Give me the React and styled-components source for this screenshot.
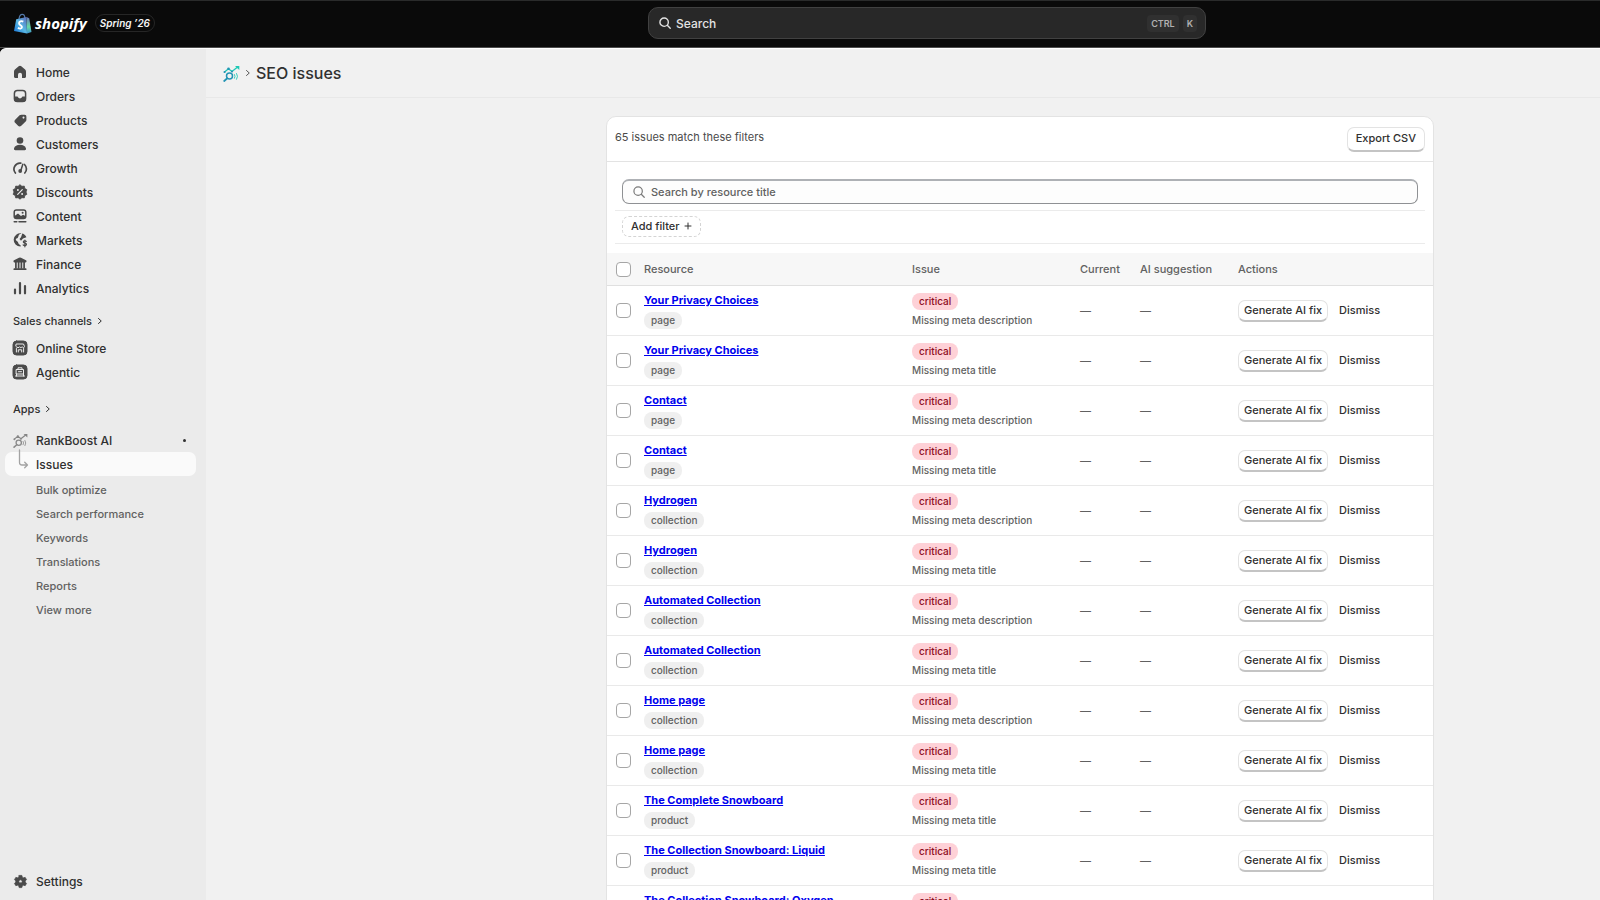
import React from 'react'
import styled, { createGlobalStyle } from 'styled-components'

const GlobalStyle = createGlobalStyle`
    * {
        box-sizing: border-box;
    }
    body {
        margin: 0;
        background: #0a0a0a;
        font-family: Inter, "Liberation Sans", sans-serif;
        font-size: 12px;
        color: #303030;
    }
    button, input {
        font-family: inherit;
    }
`
const Page = styled.div`
    height: 100vh;
    display: flex;
    flex-direction: column;
    overflow: hidden;
`
const TopBar = styled.header`
    height: 48px;
    flex-shrink: 0;
    display: grid;
    grid-template-columns: 1fr 558px 394px;
    align-items: center;
    padding-bottom: 2px;
    border-top: 1px solid #2a2b2b;
    border-bottom: 1px solid #4d4d4d;
`
const Brand = styled.div`
    display: flex;
    align-items: center;
    padding-left: 14px;
`
const Wordmark = styled.span`
    margin: 0 8px 0 3px;
    font-family: "Open Sans", sans-serif;
    font-size: 15px;
    font-weight: 700;
    font-style: italic;
    line-height: 20px;
    color: #fff;
`
const Edition = styled.span`
    padding: 0 4px;
    border: 1px solid #262626;
    border-radius: 9px;
    font-size: 10px;
    font-weight: 600;
    font-style: italic;
    line-height: 16px;
    color: #f4f4f4;
`
const GlobalSearch = styled.button`
    height: 32px;
    display: flex;
    align-items: center;
    gap: 4px;
    padding: 0 8px 0 9px;
    border: 1px solid #414141;
    border-radius: 10px;
    background: #282828;
    color: #e3e3e3;
    font-size: 12px;
    font-weight: 450;
    text-align: left;
`
const SearchText = styled.span`
    flex: 1;
`
const Key = styled.kbd`
    padding: 0 4px;
    border-radius: 4px;
    background: #303030;
    color: #b0b0b0;
    font-family: inherit;
    font-size: 9px;
    font-weight: 600;
    line-height: 17px;
`
const Body = styled.div`
    flex: 1;
    min-height: 0;
    display: flex;
    border-top: 1px solid #fff;
    border-radius: 6px 0 0 0;
    background: #f1f1f1;
    overflow: hidden;
`
const Sidebar = styled.nav`
    width: 206px;
    flex-shrink: 0;
    display: flex;
    flex-direction: column;
    padding: 11px 10px 7px 5px;
    background: #ebebeb;
`
const NavList = styled.ul`
    margin: 0;
    padding: 0;
    list-style: none;
`
const SubNavList = styled(NavList)`
    padding-top: 2px;
`
const NavLink = styled.a`
    height: 24px;
    display: flex;
    align-items: center;
    gap: 8px;
    padding: 0 10px 0 7px;
    border-radius: 7px;
    background: ${props => props.$active ? '#fafafa' : 'transparent'};
    color: ${props => props.$sub ? '#616161' : '#303030'};
    font-size: ${props => props.$sub ? 11 : 12}px;
    font-weight: 500;
    text-decoration: none;
`
const NavIcon = styled.span`
    width: 16px;
    height: 24px;
    flex-shrink: 0;
    display: flex;
    align-items: center;
    justify-content: center;
    color: #4a4a4a;
`
const NavSection = styled.button`
    display: flex;
    align-items: center;
    gap: 4px;
    margin: ${props => props.$first ? '10px 0 4px' : '14px 0 8px'};
    padding: 0 8px;
    border: none;
    background: none;
    color: #303030;
    font-size: 11px;
    font-weight: 500;
    line-height: 22px;
`
const Dot = styled.span`
    width: 3px;
    height: 3px;
    margin-left: auto;
    border-radius: 50%;
    background: #303030;
`
const NavBottom = styled.div`
    margin-top: auto;
`
const Main = styled.main`
    flex: 1;
    min-width: 0;
`
const TitleBar = styled.div`
    height: 49px;
    display: flex;
    align-items: center;
    gap: 4px;
    padding-left: 17px;
    border-bottom: 1px solid #e8e8e8;
`
const Title = styled.h1`
    margin: 0;
    font-size: 16px;
    font-weight: 550;
    line-height: 20px;
`
const Content = styled.div`
    display: flex;
    justify-content: flex-end;
    padding: 18px 166px 0 20px;
`
const Card = styled.section`
    width: 828px;
    border: 1px solid #e3e3e3;
    border-radius: 10px;
    background: #fff;
    overflow: hidden;
`
const CardHeader = styled.div`
    height: 45px;
    display: flex;
    align-items: center;
    justify-content: space-between;
    padding: 0 8px;
    border-bottom: 1px solid #e3e3e3;
`
const Summary = styled.p`
    margin: 0;
    padding-bottom: 4px;
    font-size: 11px;
    font-weight: 400;
    color: #4a4a4a;
`
const Button = styled.button`
    height: ${props => props.$small ? 22 : 25}px;
    padding: ${props => props.$small ? '0 5px 1px' : '0 8px 2px'};
    border: 1px solid #e3e3e3;
    border-bottom: 2px solid #c4c4c4;
    border-radius: 7px;
    background: #fff;
    color: #303030;
    font-size: 11px;
    font-weight: 500;
    white-space: nowrap;
`
const PlainButton = styled(Button)`
    border-color: transparent;
    background: none;
`
const Filters = styled.div`
    padding: 17px 8px 9px;
`
const SearchField = styled.label`
    height: 25px;
    display: flex;
    align-items: center;
    gap: 5px;
    margin: 0 7px;
    padding: 0 9px 1px;
    border: 1px solid #8f9194;
    border-top: 2px solid #aeb1b5;
    border-radius: 7px;
    background: #fdfdfd;
    color: #7a7a7a;
`
const SearchInput = styled.input`
    flex: 1;
    padding: 0;
    border: none;
    outline: none;
    background: none;
    font-size: 11px;
    font-weight: 500;
    line-height: 16px;
    &::placeholder {
        color: #616161;
        opacity: 1;
    }
`
const FilterRow = styled.div`
    display: flex;
    margin-top: 6px;
    padding: 5px 7px 6px;
    border-top: 1px solid #ebebeb;
    border-bottom: 1px solid #ebebeb;
`
const AddFilter = styled.button`
    height: 21px;
    display: flex;
    align-items: center;
    gap: 4px;
    padding: 0 8px 1px;
    border: 1px dashed #d4d4d4;
    border-radius: 7px;
    background: none;
    color: #303030;
    font-size: 11px;
    font-weight: 450;
`
const Table = styled.table`
    width: 100%;
    table-layout: fixed;
    border-collapse: separate;
    border-spacing: 0;
`
const Col = styled.col`
    width: ${props => props.$width};
`
const HeadCell = styled.th`
    height: 33px;
    padding: 0;
    border-bottom: 1px solid #e0e0e0;
    background: #f7f7f7;
    color: #616161;
    font-size: 11px;
    font-weight: 500;
    text-align: left;
`
const Cell = styled.td`
    height: 50px;
    padding: 0;
    border-bottom: 1px solid #e9e9e9;
    color: #616161;
    font-size: 11px;
    vertical-align: middle;
`
const Checkbox = styled.input`
    width: 15px;
    height: 15px;
    display: block;
    margin: 0 0 0 9px;
    appearance: none;
    border: 1px solid #a6a6a6;
    border-radius: 4px;
    background: #fff;
`
const Stack = styled.div`
    display: flex;
    flex-direction: column;
    align-items: flex-start;
    gap: ${props => props.$gap}px;
    white-space: nowrap;
`
const ResourceLink = styled.a`
    color: #0000ee;
    font-size: 11px;
    font-weight: 700;
    line-height: 16px;
`
const Badge = styled.span`
    padding: 0 7px;
    border-radius: 8px;
    background: ${props => props.$critical ? '#fed1d7' : '#efefef'};
    color: ${props => props.$critical ? '#8e0b21' : '#616161'};
    font-size: 10px;
    font-weight: ${props => props.$critical ? 550 : 500};
    line-height: 17px;
`
const IssueText = styled.span`
    font-size: 10px;
    font-weight: 500;
    line-height: 17px;
`
const Actions = styled.div`
    display: flex;
    align-items: center;
    gap: 5px;
`

const Svg = ({ size = 16, children, ...rest }) => (
    <svg width={size} height={size} viewBox="0 0 16 16" fill="none" stroke="currentColor"
        strokeLinecap="round" strokeLinejoin="round" aria-hidden="true" {...rest}>{children}</svg>
)

const SearchIcon = ({ width = 1.4 }) => (
    <Svg size={14} strokeWidth={width}><circle cx="7" cy="7" r="4.8" /><path d="M10.6 10.6L14 14" /></Svg>
)

const Chevron = ({ size = 8, width = 2 }) => (
    <Svg size={size} strokeWidth={width}><path d="M5 3l5.500 5L5 13" /></Svg>
)

const ShopifyBag = () => (
    <svg width="18" height="21" viewBox="0 0 18 21" aria-hidden="true">
        <defs>
            <linearGradient id="bag" x1="0" y1="1" x2="1" y2="0">
                <stop offset="0" stopColor="#1672d8" />
                <stop offset="0.5" stopColor="#58b7e4" />
                <stop offset="1" stopColor="#5c69b8" />
            </linearGradient>
            <linearGradient id="bagSide" x1="0" y1="0" x2="0" y2="1">
                <stop offset="0" stopColor="#6774bb" />
                <stop offset="0.6" stopColor="#68d8a4" />
                <stop offset="1" stopColor="#3c91d4" />
            </linearGradient>
        </defs>
        <path d="M5 6c.3-2.600 1.700-4.700 3.300-4.700S10.800 3 10.900 5" fill="none" stroke="#5579a8" strokeWidth="1.200" />
        <path d="M2.200 6.200L12.500 4 13 20.500 0 18z" fill="url(#bag)" />
        <path d="M12.500 4l2.700 1.300L17.500 19 13 20.500z" fill="url(#bagSide)" />
        <path d="M9.300 8.600C7.400 7.600 5 8.300 5 10.200c0 2 3 1.900 3 3.900 0 1.700-2.300 1.900-4.100.7" fill="none" stroke="#fff" strokeWidth="1.800" />
    </svg>
)

const RankIcon = ({ color = false, size = 15 }) => {
    const main = color ? '#2494b4' : '#8a8a8a'
    const accent = color ? '#1dc9b5' : '#858585'
    return (
        <svg width={size} height={size} viewBox="0 0 17 17" fill="none" strokeLinecap="round" aria-hidden="true">
            <path d="M1.500 7L5.500 3.800 9 6.500 14 2.500" stroke={accent} strokeWidth="1.300" />
            <path d="M12 1h4.300v4z" fill={accent} />
            <circle cx="1.600" cy="7" r="1.100" fill={main} />
            <circle cx="5.500" cy="3.800" r="1.300" fill={main} />
            <circle cx="9" cy="6.500" r="1.100" fill={main} />
            <circle cx="6.500" cy="11" r="3" stroke={main} strokeWidth="1.500" />
            <path d="M4.300 13.300L1.200 16" stroke={main} strokeWidth="1.800" />
            <path d="M11.500 9.500q1.200 1.800 0 3.800M13.600 8.500q1.900 2.800 0 5.800" stroke={accent} strokeWidth=".9" />
        </svg>
    )
}

const icons = {
    home: <Svg><path d="M6.700 2.200L2.900 5.500A3 3 0 002 7.700v4.800c0 .9.600 1.500 1.500 1.500H6v-3.200a2 2 0 014 0V14h2.500c.9 0 1.500-.6 1.500-1.500V7.700a3 3 0 00-.9-2.200L9.300 2.200a2 2 0 00-2.600 0z" fill="currentColor" stroke="none" /></Svg>,
    orders: <Svg><rect x="2.400" y="2.400" width="11.200" height="11.200" rx="3" strokeWidth="1.500" /><path d="M2 8.500h3.300c.8 0 .8 1.900 2.700 1.900s1.900-1.900 2.700-1.900H14V11a3 3 0 01-3 3H5a3 3 0 01-3-3z" fill="currentColor" stroke="none" /></Svg>,
    products: <Svg size={15}><path fillRule="evenodd" d="M9 1.800h3.300A2 2 0 0114.300 4v3.200c0 .7-.3 1.300-.8 1.800l-4.700 4.700c-1 1-2.500 1-3.400 0L2.300 10.500c-1-1-1-2.400 0-3.400L7 2.500c.5-.5 1.200-.7 2-.7zM11.200 6a1.100 1.100 0 100-2.200 1.100 1.100 0 000 2.200z" fill="currentColor" stroke="none" /></Svg>,
    customers: <Svg><g fill="currentColor" stroke="none"><circle cx="8" cy="4.500" r="3.300" /><path d="M2 12.600C2.600 10 5 8.800 8 8.800s5.400 1.200 6 3.800c.2.900-.4 1.600-1.300 1.600H3.300c-.9 0-1.500-.7-1.300-1.600z" /></g></Svg>,
    growth: <Svg><path d="M3.400 13A6 6 0 018.800 3.200M12.500 4.500a6 6 0 01.3 8.500" strokeWidth="1.700" /><path d="M10.800 4.300L9 10" strokeWidth="1.500" /><circle cx="8.200" cy="11" r="1.900" fill="currentColor" stroke="none" /></Svg>,
    discounts: <Svg><path d="M8 .8l1.900 1.500 2.400-.2.500 2.400 2.100 1.200L14 8l.9 2.300-2.100 1.200-.5 2.400-2.400-.2L8 15.200l-1.900-1.500-2.400.2-.5-2.400-2.100-1.200L2 8l-.9-2.300 2.100-1.200.5-2.400 2.400.2z" fill="currentColor" stroke="currentColor" strokeWidth=".8" /><path d="M5.700 10.300l4.600-4.600" stroke="#ebebeb" strokeWidth="1.200" /><circle cx="5.900" cy="6" r="1" fill="#ebebeb" stroke="none" /><circle cx="10.100" cy="10" r="1" fill="#ebebeb" stroke="none" /></Svg>,
    content: <Svg><rect x="2.200" y="1.900" width="11.600" height="8.600" rx="2.200" strokeWidth="1.500" /><path d="M2.500 8L6 5.600 9 8l2-1.300L13.500 8v2h-11z" fill="currentColor" stroke="none" /><circle cx="10.600" cy="4.800" r="1" fill="currentColor" stroke="none" /><path d="M2.200 13.700h2.600M7 13.700h6.800" strokeWidth="1.500" /></Svg>,
    markets: <Svg><path d="M9.500 1.300A6.700 6.700 0 108.600 14.600c.5-1.200-.2-1.700-1.200-2.200-1.100-.6-1-1.700-1.700-2.700-.6-.8-1.900-1-1.900-2.300 0-1.100 1.300-.7 2-1.600.8-1 .4-2.200 1.300-3.100.6-.7 1.600-.5 2.400-1.400z" fill="currentColor" stroke="none" /><path d="M10.300 1.500c2 .5 3.500 2 4.100 3.800L11 6.500 9 8.800 7.500 7 9 5.200z" fill="currentColor" stroke="none" /><path d="M14.300 9.300c-.9-.9-3-.7-3 .6 0 1.500 3.200.9 3.200 2.400s-2.400 1.600-3.400.6M12.900 8v6.800" strokeWidth="1.200" /></Svg>,
    finance: <Svg><path d="M7 1.700L2 4.200c-1 .6-.6 2.300.5 2.300h11c1.100 0 1.500-1.700.5-2.300L9 1.700a2 2 0 00-2 0z" fill="currentColor" stroke="none" /><path d="M2.300 13.200h11.400" strokeWidth="1.700" /><path d="M3.900 6v6M6.600 6v6M9.400 6v6M12.100 6v6" strokeWidth="1.700" /></Svg>,
    analytics: <Svg><path d="M3 9.500v3.800M8 3v10.300M13 6v7.300" strokeWidth="2.200" /></Svg>,
    store: <Svg><rect x="1" y="1" width="14" height="14" rx="3.500" fill="currentColor" /><g stroke="#ebebeb" strokeWidth="1"><path d="M4.500 4h7l1 2.500c0 1.400-2 1.500-2.300.2-.4 1.300-2.300 1.300-2.600 0-.4 1.300-2.600 1.200-3.600-.2zM4.400 8.500V12M11.600 8.500V12M6.300 12V9.800h3.400V12" /></g></Svg>,
    agentic: <Svg><rect x="1" y="1" width="14" height="14" rx="3.500" fill="currentColor" /><g stroke="#ebebeb" strokeWidth="1"><path d="M6 5V3.800h4V5M4.500 5.500h7V10h-7zM3.500 12h9M4.500 10v2M11.500 10v2M6.500 7.700h3" /></g></Svg>,
    settings: <Svg size={15}><path fillRule="evenodd" d="M6.600 1.500h2.800l.5 1.900 1.200.7 1.900-.5 1.400 2.400L13 7.400v1.200l1.400 1.400-1.400 2.400-1.900-.5-1.200.7-.5 1.900H6.600l-.5-1.900-1.200-.7-1.900.5L1.600 10 3 8.600V7.400L1.600 6 3 3.600l1.900.5 1.200-.7zM8 9.800a1.800 1.800 0 100-3.600 1.800 1.800 0 000 3.600z" fill="currentColor" strokeWidth=".8" /></Svg>,
    rank: <RankIcon />,
    branch: <Svg width="16" height="24" viewBox="0 0 16 24" overflow="visible" stroke="#a3a3a3" strokeWidth="1.300"><path d="M7.500 -2V10.500q0 2.500 2.500 2.500H15.500M12.700 10.200L15.500 13l-2.800 2.800" /></Svg>,
}

const mainNav = [
    ['home', 'Home'],
    ['orders', 'Orders'],
    ['products', 'Products'],
    ['customers', 'Customers'],
    ['growth', 'Growth'],
    ['discounts', 'Discounts'],
    ['content', 'Content'],
    ['markets', 'Markets'],
    ['finance', 'Finance'],
    ['analytics', 'Analytics'],
]
const channels = [
    ['store', 'Online Store'],
    ['agentic', 'Agentic'],
]
const appPages = ['Bulk optimize', 'Search performance', 'Keywords', 'Translations', 'Reports', 'View more']

const issues = [
    ['Your Privacy Choices', 'page', 'Missing meta description'],
    ['Your Privacy Choices', 'page', 'Missing meta title'],
    ['Contact', 'page', 'Missing meta description'],
    ['Contact', 'page', 'Missing meta title'],
    ['Hydrogen', 'collection', 'Missing meta description'],
    ['Hydrogen', 'collection', 'Missing meta title'],
    ['Automated Collection', 'collection', 'Missing meta description'],
    ['Automated Collection', 'collection', 'Missing meta title'],
    ['Home page', 'collection', 'Missing meta description'],
    ['Home page', 'collection', 'Missing meta title'],
    ['The Complete Snowboard', 'product', 'Missing meta title'],
    ['The Collection Snowboard: Liquid', 'product', 'Missing meta title'],
    ['The Collection Snowboard: Oxygen', 'product', 'Missing meta title'],
]

function NavItem({ icon, label, children, ...rest }) {
    return (
        <li>
            <NavLink href="#" {...rest}>
                <NavIcon>{icons[icon]}</NavIcon>
                {label}
                {children}
            </NavLink>
        </li>
    )
}

function IssueRow({ title, type, issue }) {
    return (
        <tr>
            <Cell><Checkbox type="checkbox" aria-label={`Select ${title}`} /></Cell>
            <Cell>
                <Stack $gap={4}>
                    <ResourceLink href="#">{title}</ResourceLink>
                    <Badge>{type}</Badge>
                </Stack>
            </Cell>
            <Cell>
                <Stack $gap={2}>
                    <Badge $critical>critical</Badge>
                    <IssueText>{issue}</IssueText>
                </Stack>
            </Cell>
            <Cell>—</Cell>
            <Cell>—</Cell>
            <Cell>
                <Actions>
                    <Button $small>Generate AI fix</Button>
                    <PlainButton $small>Dismiss</PlainButton>
                </Actions>
            </Cell>
        </tr>
    )
}

export default function App() {
    return (
        <Page>
            <GlobalStyle />
            <TopBar>
                <Brand>
                    <ShopifyBag />
                    <Wordmark>shopify</Wordmark>
                    <Edition>Spring ’26</Edition>
                </Brand>
                <GlobalSearch>
                    <SearchIcon width={1.6} />
                    <SearchText>Search</SearchText>
                    <Key>CTRL</Key>
                    <Key>K</Key>
                </GlobalSearch>
            </TopBar>
            <Body>
                <Sidebar>
                    <NavList>
                        {mainNav.map(([icon, label]) => <NavItem key={label} icon={icon} label={label} />)}
                    </NavList>
                    <NavSection $first>Sales channels <Chevron /></NavSection>
                    <NavList>
                        {channels.map(([icon, label]) => <NavItem key={label} icon={icon} label={label} />)}
                    </NavList>
                    <NavSection>Apps <Chevron /></NavSection>
                    <NavList>
                        <NavItem icon="rank" label="RankBoost AI"><Dot /></NavItem>
                        <NavItem icon="branch" label="Issues" $active />
                    </NavList>
                    <SubNavList>
                        {appPages.map(label => <NavItem key={label} label={label} $sub />)}
                    </SubNavList>
                    <NavBottom>
                        <NavList>
                            <NavItem icon="settings" label="Settings" />
                        </NavList>
                    </NavBottom>
                </Sidebar>
                <Main>
                    <TitleBar>
                        <RankIcon color size={17} />
                        <Chevron size={8} width={1.6} />
                        <Title>SEO issues</Title>
                    </TitleBar>
                    <Content>
                        <Card>
                            <CardHeader>
                                <Summary>65 issues match these filters</Summary>
                                <Button>Export CSV</Button>
                            </CardHeader>
                            <Filters>
                                <SearchField>
                                    <SearchIcon />
                                    <SearchInput type="text" placeholder="Search by resource title" aria-label="Search by resource title" />
                                </SearchField>
                                <FilterRow>
                                    <AddFilter>
                                        Add filter
                                        <Svg size={8} strokeWidth="2"><path d="M8 2v12M2 8h12" /></Svg>
                                    </AddFilter>
                                </FilterRow>
                            </Filters>
                            <Table>
                                <colgroup>
                                    <Col $width="37px" />
                                    <Col $width="auto" />
                                    <Col $width="168px" />
                                    <Col $width="60px" />
                                    <Col $width="98px" />
                                    <Col $width="195px" />
                                </colgroup>
                                <thead>
                                    <tr>
                                        <HeadCell><Checkbox type="checkbox" aria-label="Select all issues" /></HeadCell>
                                        <HeadCell>Resource</HeadCell>
                                        <HeadCell>Issue</HeadCell>
                                        <HeadCell>Current</HeadCell>
                                        <HeadCell>AI suggestion</HeadCell>
                                        <HeadCell>Actions</HeadCell>
                                    </tr>
                                </thead>
                                <tbody>
                                    {issues.map(([title, type, issue], index) => (
                                        <IssueRow key={index} title={title} type={type} issue={issue} />
                                    ))}
                                </tbody>
                            </Table>
                        </Card>
                    </Content>
                </Main>
            </Body>
        </Page>
    )
}
